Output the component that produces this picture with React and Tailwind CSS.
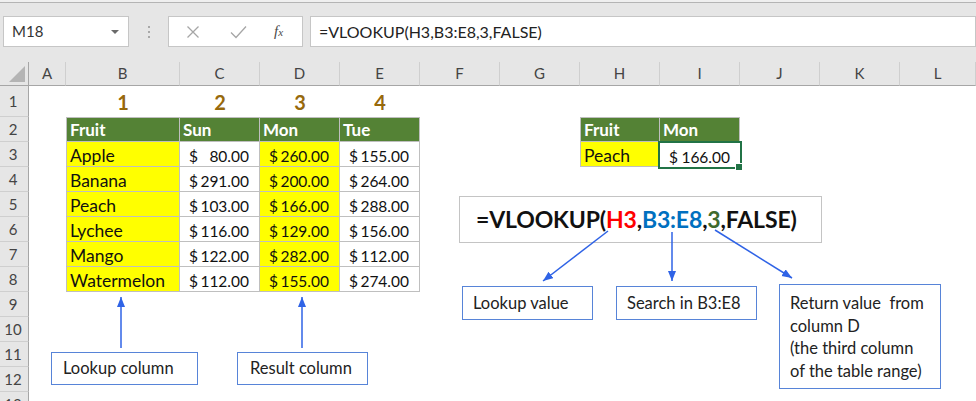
import React from "react";
import clsx from "clsx";

const COLS = ["A", "B", "C", "D", "E", "F", "G", "H", "I", "J", "K", "L"];

// grid column index: 1 = row header, 2 = A ... 13 = L
const colStart = [
  "",
  "col-start-1",
  "col-start-2",
  "col-start-3",
  "col-start-4",
  "col-start-5",
  "col-start-6",
  "col-start-7",
  "col-start-8",
  "col-start-9",
  "col-start-10",
  "col-start-11",
  "col-start-12",
  "col-start-13",
];

// grid row index: 1 = column header, 2 = sheet row 1 ... 14 = sheet row 13
const rowStart = [
  "",
  "row-start-1",
  "row-start-2",
  "row-start-3",
  "row-start-4",
  "row-start-5",
  "row-start-6",
  "row-start-7",
  "row-start-8",
  "row-start-9",
  "row-start-10",
  "row-start-11",
  "row-start-12",
  "row-start-13",
  "row-start-14",
];

const fruits = [
  ["Apple", "80.00", "260.00", "155.00"],
  ["Banana", "291.00", "200.00", "264.00"],
  ["Peach", "103.00", "166.00", "288.00"],
  ["Lychee", "116.00", "129.00", "156.00"],
  ["Mango", "122.00", "282.00", "112.00"],
  ["Watermelon", "112.00", "155.00", "274.00"],
];

const tableBorder = "border-r border-b border-[#bfbfbf]";
const textCell = "flex items-end pl-[3px] text-[17.5px] leading-[20px]";
const moneyCell = "flex items-end justify-between pr-[10px] pl-[9px] text-[15.5px] leading-[20px] text-[#111]";
const headCell = "flex items-end border-t bg-[#548235] pb-[1px] pl-[3px] text-[17px] leading-[20px] font-bold text-white";

function Cell({ col, row, className, children }) {
  return <div className={clsx(colStart[col], rowStart[row], className)}>{children}</div>;
}

function Money({ value }) {
  return (
    <>
      <span>$</span>
      <span>{value}</span>
    </>
  );
}

function FormulaBar() {
  return (
    <div className="h-[62px] bg-[#e6e6e6]">
      <div className="h-[3px] border-b border-[#b4b4b4] bg-[#efefef]" />
      <div className="flex pt-[13px] pl-[3px]">
        <div className="flex h-[31px] w-[126px] items-center justify-between border border-[#c6c6c6] bg-white pr-[9px] pl-[8px] text-[15px] text-[#333]">
          <span>M18</span>
          <span className="h-0 w-0 border-x-[4px] border-t-[4px] border-x-transparent border-t-[#6a6a6a]" />
        </div>
        <div className="flex w-[39px] flex-col items-center justify-center gap-[3px]">
          <span className="h-[2px] w-[2px] bg-[#a8a8a8]" />
          <span className="h-[2px] w-[2px] bg-[#a8a8a8]" />
          <span className="h-[2px] w-[2px] bg-[#a8a8a8]" />
        </div>
        <div className="flex h-[31px] w-[135px] items-center border border-[#c6c6c6] bg-white text-[#a6a6a6]">
          <svg className="ml-[17px]" width="14" height="14" viewBox="0 0 14 14">
            <path d="M1.5 1.5 L12.5 12.5 M12.5 1.5 L1.5 12.5" stroke="#a6a6a6" strokeWidth="1.3" />
          </svg>
          <svg className="ml-[30px]" width="17" height="14" viewBox="0 0 17 14">
            <path d="M1 7.5 L6 12.5 L16 1.5" fill="none" stroke="#a6a6a6" strokeWidth="1.3" />
          </svg>
          <span className="ml-[27px] font-['Liberation_Serif',serif] text-[15px] text-[#4a4a4a] italic">
            f<span className="text-[11px]">x</span>
          </span>
        </div>
        <div className="ml-[7px] flex h-[31px] flex-1 items-center border border-[#c6c6c6] bg-white pl-[8px] text-[16px] text-[#222]">
          =VLOOKUP(H3,B3:E8,3,FALSE)
        </div>
      </div>
    </div>
  );
}

function Sheet() {
  const rows = [1, 2, 3, 4, 5, 6, 7, 8, 9, 10, 11, 12, 13];
  return (
    <div className="grid grid-cols-[29px_37px_114px_80px_80px_80px_80px_80px_80px_80px_80px_80px_1fr] grid-rows-[24px_31px_repeat(12,25px)_1fr] bg-white">
      {/* corner */}
      <Cell col={1} row={1} className="relative border-r border-b border-[#a6a6a6] bg-[#e6e6e6]">
        <span className="absolute right-[3px] bottom-[3px] h-0 w-0 border-b-[16px] border-l-[16px] border-b-[#b4b4b4] border-l-transparent" />
      </Cell>
      {COLS.map((c, i) => (
        <Cell
          key={c}
          col={i + 2}
          row={1}
          className="flex items-center justify-center border-r border-b border-r-[#cfcfcf] border-b-[#a6a6a6] bg-[#e6e6e6] text-[15px] text-[#444]"
        >
          {c}
        </Cell>
      ))}
      {rows.map((r) => (
        <Cell
          key={r}
          col={1}
          row={r + 1}
          className="flex items-center justify-center border-r border-b border-r-[#a6a6a6] border-b-[#cfcfcf] bg-[#e6e6e6] pr-[2px] text-[15px] text-[#444]"
        >
          {r}
        </Cell>
      ))}

      {/* row 1 column numbers */}
      {[1, 2, 3, 4].map((n) => (
        <Cell
          key={n}
          col={n + 2}
          row={2}
          className="flex items-end justify-center pb-[4px] text-[20px] leading-[22px] font-bold text-[#97690c]"
        >
          {n}
        </Cell>
      ))}

      {/* main table header */}
      {["Fruit", "Sun", "Mon", "Tue"].map((h, i) => (
        <Cell key={h} col={i + 3} row={3} className={clsx(tableBorder, headCell, i === 0 && "border-l")}>
          {h}
        </Cell>
      ))}

      {/* main table body */}
      {fruits.map((f, ri) => (
        <React.Fragment key={f[0]}>
          <Cell col={3} row={ri + 4} className={clsx(tableBorder, textCell, "border-l bg-[#ffff00] text-[#111]")}>
            {f[0]}
          </Cell>
          <Cell col={4} row={ri + 4} className={clsx(tableBorder, moneyCell, "bg-white")}>
            <Money value={f[1]} />
          </Cell>
          <Cell col={5} row={ri + 4} className={clsx(tableBorder, moneyCell, "bg-[#ffff00]")}>
            <Money value={f[2]} />
          </Cell>
          <Cell col={6} row={ri + 4} className={clsx(tableBorder, moneyCell, "bg-white")}>
            <Money value={f[3]} />
          </Cell>
        </React.Fragment>
      ))}

      {/* lookup result table */}
      <Cell col={9} row={3} className={clsx(tableBorder, headCell, "border-l")}>
        Fruit
      </Cell>
      <Cell col={10} row={3} className={clsx(tableBorder, headCell)}>
        Mon
      </Cell>
      <Cell col={9} row={4} className={clsx(tableBorder, textCell, "border-l bg-[#ffff00] text-[#111]")}>
        Peach
      </Cell>
      <Cell col={10} row={4} className={clsx(moneyCell, "relative bg-white")}>
        <Money value="166.00" />
        <span className="absolute -top-[1px] -left-[2px] h-[28px] w-[84px] border-2 border-[#217346]" />
        <span className="absolute -right-[3px] -bottom-[4px] h-[8px] w-[8px] border border-white bg-[#217346]" />
      </Cell>
    </div>
  );
}

function Callout({ className, children }) {
  return (
    <div className={clsx("absolute border-[1.5px] border-[#5784d8] bg-white text-[16.5px] text-[#222]", className)}>
      {children}
    </div>
  );
}

function Annotations() {
  return (
    <>
      <div className="absolute top-[196px] left-[459px] flex h-[47px] w-[363px] items-center border-[1.5px] border-[#c4c4c4] bg-white pl-[16px] text-[23px] tracking-[-0.15px] font-bold text-[#111]">
        <span>=VLOOKUP(</span>
        <span className="text-[#ff0000]">H3</span>
        <span>,</span>
        <span className="text-[#0070c0]">B3:E8</span>
        <span>,</span>
        <span className="text-[#3f6b2d]">3</span>
        <span>,FALSE)</span>
      </div>

      <Callout className="top-[286px] left-[462px] flex h-[34px] w-[131px] items-center pl-[10px]">Lookup value</Callout>
      <Callout className="top-[286px] left-[616px] flex h-[34px] w-[141px] items-center pl-[10px]">Search in B3:E8</Callout>
      <Callout className="top-[284px] left-[779px] h-[105px] w-[162px] pt-[7px] pl-[10px] leading-[22.5px] whitespace-pre">
        {"Return value  from\ncolumn D\n(the third column\nof the table range)"}
      </Callout>
      <Callout className="top-[352px] left-[51px] flex h-[33px] w-[147px] items-center pl-[11px]">Lookup column</Callout>
      <Callout className="top-[352px] left-[237px] flex h-[33px] w-[131px] items-center pl-[12px]">Result column</Callout>

      <svg className="pointer-events-none absolute inset-0" width="976" height="401" viewBox="0 0 976 401">
        <defs>
          <marker id="ah" markerUnits="userSpaceOnUse" markerWidth="11" markerHeight="9" refX="10" refY="4" orient="auto">
            <path d="M0 0 L10 4 L0 8 Z" fill="#2f63e6" />
          </marker>
        </defs>
        <g stroke="#2f63e6" strokeWidth="1.5" fill="none" markerEnd="url(#ah)">
          <line x1="608" y1="231" x2="543" y2="281" />
          <line x1="672" y1="232" x2="672" y2="281" />
          <line x1="715" y1="230" x2="792" y2="278" />
          <line x1="121" y1="348" x2="121" y2="297" />
          <line x1="302" y1="348" x2="302" y2="297" />
        </g>
      </svg>
    </>
  );
}

export default function App() {
  return (
    <div className="relative h-[401px] w-[976px] overflow-hidden bg-white font-['Lato','Liberation_Sans',sans-serif]">
      <FormulaBar />
      <Sheet />
      <Annotations />
    </div>
  );
}
